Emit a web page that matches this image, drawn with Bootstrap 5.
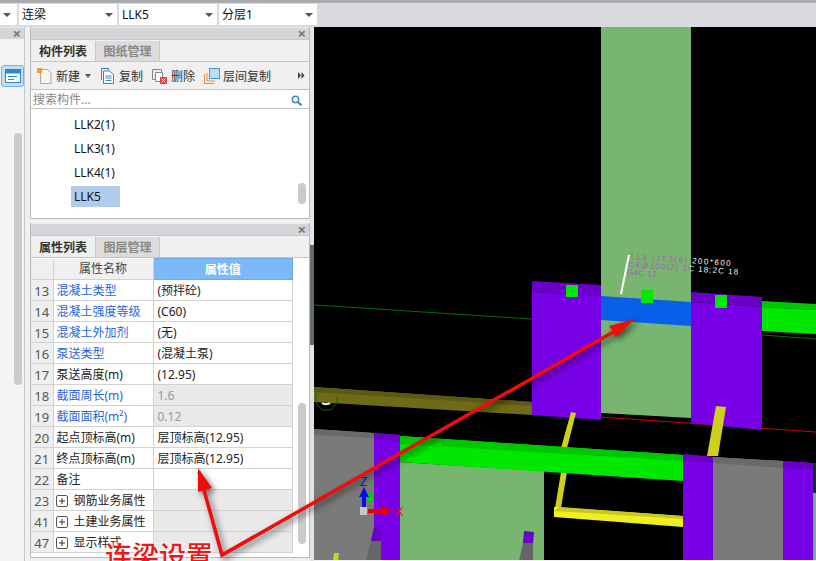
<!DOCTYPE html>
<html lang="en">
<head>
    <meta charset="UTF-8">
    <meta name="viewport" content="width=device-width, initial-scale=1.0">
    <title>构件属性</title>
    <link href="https://cdn.jsdelivr.net/npm/bootstrap@5.3.0/dist/css/bootstrap.min.css" rel="stylesheet">
    <style>
        html, body { height: 561px; overflow: hidden; }
        body {
            width: 816px; position: relative; background: #f0f0f0; color: #222;
            font: 12px/16px "Noto Sans", "Noto Sans CJK SC", sans-serif;
        }
        .top-bar { height: 27px; padding: 1px 0 2px; gap: 2px; background: #d9dade; border-top: 3px solid #a9abb0; }
        .combo {
            width: 98px; height: 21px; background: #fff; padding: 0 4px 0 3px;
            display: flex; align-items: center; justify-content: space-between; color: #111;
        }
        .combo.first { width: 17px; }
        .combo::after { content: ""; border: 4px solid transparent; border-top: 4px solid #555; border-bottom: 0; }
        .work { height: 534px; }
        .rail { width: 25px; background: #f4f4f4; border-right: 1px solid #c6c6c6; position: relative; }
        .rail-btn {
            width: 23px; height: 22px; margin: 26px 0 0 1px; background: #bfe0fb; border: 1px solid #6db2ea;
            border-radius: 3px; display: flex; align-items: center; justify-content: center;
        }
        .dock { width: 285px; padding-left: 5px; }
        .strip { width: 4px; background: #e3e3e6; padding-top: 218px; }
        .strip div { height: 100px; background: #666b73; }
        .panel { width: 280px; background: #f0f0f0; border: 1px solid #b9b9b9; border-top: 0; }
        .panel-head { height: 12px; background: #d3d5d9; border-top: 1px solid #e8e8ea; display: flex; align-items: center; justify-content: flex-end; padding-right: 3px; }
        .x-mark { font-size: 15px; line-height: 11px; font-weight: 700; color: #777; }
        .tabs { height: 23px; border-top: 1px solid #c8c8c8; border-bottom: 1px solid #c4c4c4; }
        .tab-item { width: 65px; text-align: center; font-weight: 700; }
        .tab-item.on { color: #333; width: 64px; line-height: 24px; }
        .tab-item.off { background: #dcdcdc; color: #888; border: 1px solid #c8c8c8; border-width: 0 1px; margin-top: 1px; line-height: 21px; }
        .tools { height: 27px; padding-left: 6px; align-items: center; color: #333; }
        .tools span { padding-top: 2px; }
        .lbl-a { margin: 0 5px 0 4px; }
        .ico-b { margin-left: 10px; }
        .lbl-b { margin: 0 9px 0 5px; }
        .lbl-c { margin: 0 9px 0 4px; }
        .lbl-d { margin-left: 3px; }
        .search { height: 20px; background: #fff; border-top: 1px solid #c4c4c4; border-bottom: 1px solid #c4c4c4; padding: 2px 7px 0 2px; color: #888; align-items: center; justify-content: space-between; }
        .tree { height: 109px; background: #fff; position: relative; padding: 4px 0 0 40px; color: #111; }
        .tree-row { height: 24px; line-height: 24px; width: 49px; padding-left: 3px; }
        .tree-row.sel { background: #b1cbed; height: 21px; line-height: 21px; margin-top: 1px; }
        .thumb { position: absolute; width: 8px; background: #cbcbcb; border-radius: 4px; }
        .thumb-rail { left: 14px; top: 106px; height: 252px; }
        .thumb-tree { left: 267px; top: 74px; height: 21px; }
        .thumb-props { left: 267px; top: 145px; height: 141px; }
        .props { position: relative; background: #fff; height: 299px; }
        .prop-table { width: 262px; table-layout: fixed; border-collapse: collapse; margin: 0; }
        .prop-table td, .prop-table th { height: 21px; padding: 1px 3px 0; border: 1px solid #d2d2d2; line-height: 16px; white-space: nowrap; overflow: hidden; font-weight: 400; }
        .prop-table tr > *:first-child { border-left: 0; }
        .prop-table tr > td:last-child { padding-left: 4px; }
        .prop-table .num { width: 22px; background: #efefef; text-align: center; color: #555; padding: 1px 0 0; font-size: 13px; }
        .prop-table .nm { width: 100px; }
        .prop-table th { text-align: center; background: #f0f0f0; color: #444; border-top: 0; }
        .prop-table th.val { background: #7db9f8; color: #fff; font-weight: 700; border: 1px solid #6aa9ea; }
        .lnk { color: #2766e0; }
        .ro { background: #e9e9e9; }
        .ro-txt { color: #999; }
        .plus { display: inline-block; width: 12px; height: 12px; border: 1px solid #555; border-radius: 2px; position: relative; margin: 0 6px 0 -1px; vertical-align: -2px; background: #fff; }
        .plus::before { content: ""; position: absolute; left: 2px; right: 2px; top: 4px; height: 2px; background: #333; transform: scaleY(.5); }
        .plus::after { content: ""; position: absolute; top: 2px; bottom: 2px; left: 4px; width: 2px; background: #333; transform: scaleX(.5); }
        .view { width: 502px; height: 533px; background: #000; }
        .view svg { display: block; }
        .over { position: absolute; left: 0; top: 0; width: 816px; height: 561px; pointer-events: none; filter: drop-shadow(3px 3px 3px rgba(0,0,0,.55)); }
        .note {
            position: absolute; left: 105px; top: 539px; font: 500 27px/32px "Noto Sans CJK SC", sans-serif;
            color: #f01414; text-shadow: 0 0 2px #fff, 0 0 3px #fff, 1px 1px 2px #fff;
        }
    </style>
</head>
<body>
    <div class="top-bar d-flex">
        <div class="combo first"></div>
        <div class="combo">连梁</div>
        <div class="combo">LLK5</div>
        <div class="combo">分层1</div>
    </div>
    <div class="work d-flex">
        <div class="rail">
            <div class="panel-head"><span class="x-mark">×</span></div>
            <div class="rail-btn">
                <svg width="16" height="14" viewBox="0 0 16 14"><rect x=".5" y=".5" width="15" height="13" fill="#fff" stroke="#2b86d6"/><rect x=".5" y=".5" width="15" height="4" fill="#2b86d6"/><path d="M3 7.500h9M3 10.500h6" stroke="#2b86d6"/></svg>
            </div>
            <div class="thumb thumb-rail"></div>
        </div>
        <div class="dock d-flex flex-column">
            <div class="panel">
                <div class="panel-head"><span class="x-mark">×</span></div>
                <div class="tabs d-flex">
                    <div class="tab-item on">构件列表</div>
                    <div class="tab-item off">图纸管理</div>
                </div>
                <div class="tools d-flex">
                    <svg width="15" height="16" viewBox="0 0 15 16"><path d="M3.500 1.500h7l3.500 3.500v10.500H3.500z" fill="#f7f5ec" stroke="#a9a9a0"/><rect x="0" y="0" width="5" height="5" fill="#f0a030"/></svg>
                    <span class="lbl-a">新建</span>
                    <svg width="6" height="4" viewBox="0 0 6 4"><path d="M0 0h6L3 4z" fill="#555"/></svg>
                    <svg class="ico-b" width="13" height="16" viewBox="0 0 13 16"><path d="M.5 12V.5h7v2" fill="none" stroke="#3b83cb"/><path d="M2.500 3h6l4 3.500v9h-10z" fill="#fff" stroke="#3b83cb"/><path d="M4.500 8h6M4.500 10h6M4.500 12.500h6" stroke="#3b83cb"/></svg>
                    <span class="lbl-b">复制</span>
                    <svg width="15" height="16" viewBox="0 0 15 16"><path d="M.5 1.500h9v10h-9z" fill="#eee" stroke="#888"/><path d="M3.500 4.500h7v9h-7z" fill="#fff" stroke="#888"/><rect x="8" y="9" width="7" height="7" fill="#d9434a"/><path d="M9.500 10.500l4 4m0-4l-4 4" stroke="#fff"/></svg>
                    <span class="lbl-c">删除</span>
                    <svg width="16" height="16" viewBox="0 0 16 16"><path d="M.5 15.500V6M.5 15.500H10M3 13V5M3 13h8" fill="none" stroke="#e08a45"/><rect x="5.500" y=".5" width="10" height="10" fill="#bcdcfb" stroke="#4a8fd4"/></svg>
                    <span class="lbl-d">层间复制</span>
                    <svg class="ms-auto me-1" width="7" height="7" viewBox="0 0 7 7"><path d="M0 0l3 3.500L0 7zM3.500 0l3 3.500-3 3.500z" fill="#444"/></svg>
                </div>
                <div class="search d-flex">
                    <span>搜索构件...</span>
                    <svg width="11" height="11" viewBox="0 0 11 11"><circle cx="4.500" cy="4.500" r="3.200" fill="none" stroke="#3a8ec8" stroke-width="1.500"/><path d="M7 7l3.500 3.500" stroke="#3a8ec8" stroke-width="2"/></svg>
                </div>
                <div class="tree">
                    <div class="tree-row">LLK2(1)</div>
                    <div class="tree-row">LLK3(1)</div>
                    <div class="tree-row">LLK4(1)</div>
                    <div class="tree-row sel">LLK5</div>
                    <div class="thumb thumb-tree"></div>
                </div>
            </div>
            <div class="panel mt-1">
                <div class="panel-head"><span class="x-mark">×</span></div>
                <div class="tabs d-flex">
                    <div class="tab-item on">属性列表</div>
                    <div class="tab-item off">图层管理</div>
                </div>
                <div class="props">
                    <table class="prop-table">
                        <tr><th class="num"></th><th class="nm">属性名称</th><th class="val">属性值</th></tr>
                        <tr><td class="num">13</td><td class="lnk">混凝土类型</td><td>(预拌砼)</td></tr>
                        <tr><td class="num">14</td><td class="lnk">混凝土强度等级</td><td>(C60)</td></tr>
                        <tr><td class="num">15</td><td class="lnk">混凝土外加剂</td><td>(无)</td></tr>
                        <tr><td class="num">16</td><td class="lnk">泵送类型</td><td>(混凝土泵)</td></tr>
                        <tr><td class="num">17</td><td>泵送高度(m)</td><td>(12.95)</td></tr>
                        <tr><td class="num">18</td><td class="lnk">截面周长(m)</td><td class="ro ro-txt">1.6</td></tr>
                        <tr><td class="num">19</td><td class="lnk">截面面积(m²)</td><td class="ro ro-txt">0.12</td></tr>
                        <tr><td class="num">20</td><td>起点顶标高(m)</td><td>层顶标高(12.95)</td></tr>
                        <tr><td class="num">21</td><td>终点顶标高(m)</td><td>层顶标高(12.95)</td></tr>
                        <tr><td class="num">22</td><td>备注</td><td></td></tr>
                        <tr><td class="num">23</td><td><i class="plus"></i>钢筋业务属性</td><td class="ro"></td></tr>
                        <tr><td class="num">41</td><td><i class="plus"></i>土建业务属性</td><td class="ro"></td></tr>
                        <tr><td class="num">47</td><td><i class="plus"></i>显示样式</td><td class="ro"></td></tr>
                    </table>
                    <div class="thumb thumb-props"></div>
                </div>
            </div>
        </div>
        <div class="strip"><div></div></div>
        <div class="view">
            <svg width="502" height="533" viewBox="314 27 502 533">
                <defs>
                    <linearGradient id="lbl" gradientUnits="userSpaceOnUse" x1="625" y1="0" x2="745" y2="0">
                        <stop offset=".55" stop-color="#9d62b0"/><stop offset=".55" stop-color="#fff"/>
                    </linearGradient>
                </defs>
                <!-- far wall and beam -->
                <polygon points="601,27 691,27 691,418 601,413" fill="#78b571"/>
                <line x1="314" y1="305" x2="532" y2="319" stroke="#0a6b0a"/>
                <line x1="762" y1="335" x2="816" y2="339" stroke="#0a6b0a"/>
                <polygon points="601,296 691,302 691,326 601,320" fill="#0a5fe8"/>
                <line x1="600" y1="417" x2="816" y2="432" stroke="#d00000"/>
                <polygon points="314,387 532,402 532,415 314,402" fill="#6e6a16"/>
                <polygon points="314,387 532,402 532,406 314,392" fill="#5c5914"/>
                <path d="M322 388l-6 6v9l6 7h9l6-7v-6" fill="none" stroke="#0a6b0a"/>
                <path d="M322 403a5 3 0 0 0 8 0" fill="none" stroke="#fff" stroke-width="2"/>
                <!-- columns -->
                <polygon points="532,281 601,285 601,296 532,292" fill="#6a00c8"/>
                <polygon points="532,292 601,296 601,420 532,415" fill="#7800e6"/>
                <polygon points="691,292 762,297 762,307 691,302" fill="#6a00c8"/>
                <polygon points="691,302 762,307 762,430 691,423" fill="#7800e6"/>
                <polygon points="762,301 816,304 816,310 762,307" fill="#00c800"/>
                <polygon points="762,307 816,310 816,334 762,331" fill="#00e800"/>
                <rect x="566" y="285" width="12" height="12" fill="#00e800"/>
                <rect x="641" y="290" width="12" height="13" fill="#00e800"/>
                <rect x="715" y="295" width="12" height="13" fill="#00e800"/>
                <line x1="629" y1="255" x2="621" y2="294" stroke="#fff" stroke-width="2"/>
                <g fill="url(#lbl)" font-family="Liberation Sans, sans-serif" font-size="8" transform="rotate(4 630 256)">
                    <text x="631" y="259" textLength="100">LL8 (103(9) 200*600</text>
                    <text x="629" y="267" textLength="110">C8@100(2) 2C 18;2C 18</text>
                    <text x="628" y="275" textLength="30">G4C 12</text>
                </g>
                <!-- yellow bars -->
                <polygon points="571,412 576,413 567,448 561,448" fill="#cfcf20"/>
                <polygon points="561,472 567,472 561,508 555,508" fill="#cfcf20"/>
                <polygon points="716,406 726,407 718,456 707,456" fill="#cfcf20"/>
                <polygon points="554,507 683,516 683,527 554,517" fill="#f0f020"/>
                <polygon points="560,507 683,516 683,519 554,511" fill="#c8c820"/>
                <!-- front row -->
                <polygon points="314,429 374,433 374,561 314,561" fill="#7a7a7a"/>
                <polygon points="314,429 374,433 374,438 314,435" fill="#6a6a6a"/>
                <polygon points="374,433 400,435 400,561 374,561" fill="#7800e6"/>
                <polygon points="374,433 400,435 400,441 374,440" fill="#6a00c8"/>
                <polygon points="400,462 544,471 544,561 400,561" fill="#78b571"/>
                <polygon points="400,436 683,455 683,481 400,462" fill="#00e800"/>
                <polygon points="400,436 683,455 683,461 400,444" fill="#00c800"/>
                <polygon points="683,454 713,457 713,561 683,561" fill="#7800e6"/>
                <polygon points="683,454 713,457 713,463 683,461" fill="#6a00c8"/>
                <polygon points="713,457 783,461 783,561 713,561" fill="#7a7a7a"/>
                <polygon points="713,457 783,461 783,468 713,463" fill="#6a6a6a"/>
                <polygon points="783,461 813,463 813,561 783,561" fill="#7800e6"/>
                <polygon points="783,461 813,463 813,470 783,468" fill="#6a00c8"/>
                <rect x="813" y="463" width="3" height="30" fill="#004000"/>
                <rect x="813" y="493" width="3" height="68" fill="#78b571"/>
                <polygon points="374,527 383,527 381,541 371,541" fill="#6a00c8"/>
                <polygon points="371,541 381,541 381,561 366,561" fill="#666"/>
                <polygon points="524,531 534,532 533,543 523,543" fill="#6a00c8"/>
                <polygon points="523,543 533,543 533,561 519,561" fill="#666"/>
                <polygon points="334,553 339,553 338,561 333,561" fill="#cfcf20"/>
                <!-- axis gizmo -->
                <path d="M370 486l4-6M366 497l5-6 3 5-5 7z" fill="#00d000" stroke="#00d000"/>
                <text x="360" y="486" fill="#1414e0" font-family="Liberation Sans, sans-serif" font-size="12">Z</text>
                <polygon points="364,487 369,497 366,497 366,508 362,508 362,497 359,497" fill="#0a0ae6"/>
                <rect x="360" y="507" width="7" height="8" fill="#c8c8c8"/>
                <polygon points="368,509 382,509 382,506 393,511 382,516 382,513 368,513" fill="#e60000"/>
                <text x="395" y="516" fill="#f01010" font-family="Liberation Sans, sans-serif" font-size="13">X</text>
            </svg>
        </div>
    </div>
    <!-- 标注箭头 -->
    <svg class="over" viewBox="0 0 816 561">
        <g fill="#f40a0a">
            <polyline points="199,472 222,555 622,327" fill="none" stroke="#f40a0a" stroke-width="3.500"/>
            <polygon points="635,319 609,326 616,337"/>
            <polygon points="198,468 198,492 212,488"/>
        </g>
    </svg>
    <div class="note">连梁设置</div>
    <script src="https://cdn.jsdelivr.net/npm/bootstrap@5.3.0/dist/js/bootstrap.bundle.min.js"></script>
</body>
</html>
